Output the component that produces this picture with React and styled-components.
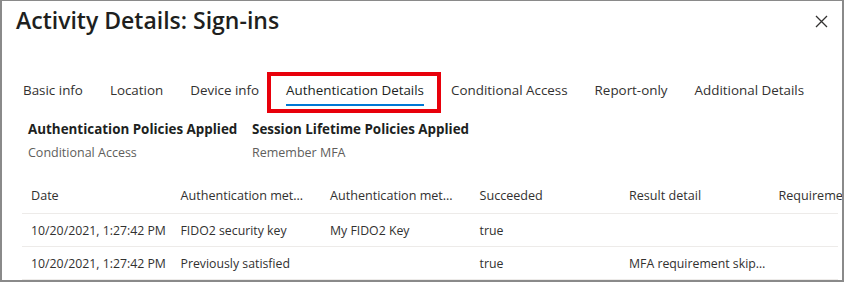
import React from 'react';
import styled, { createGlobalStyle } from 'styled-components';

const GlobalStyle = createGlobalStyle`
  html, body {
    margin: 0;
    padding: 0;
    background: #fff;
  }
  body {
    font-family: 'Open Sans', 'Noto Sans', sans-serif;
    color: #323130;
  }
`;

const Frame = styled.div`
  box-sizing: border-box;
  width: 844px;
  height: 282px;
  border: 2px solid #8a8a8a;
  border-top-width: 1px;
  overflow: hidden;
  background: #fff;
  padding-right: 4px;
`;

const Header = styled.div`
  display: flex;
  justify-content: space-between;
  align-items: flex-start;
  padding: 3px 9px 0 14px;
`;

const Title = styled.h1`
  margin: 0;
  font-size: 23px;
  font-weight: 600;
  line-height: 32px;
  color: #201f1e;
`;

const CloseButton = styled.button`
  border: 0;
  background: none;
  padding: 0;
  margin-top: 9px;
  width: 16px;
  height: 16px;
  display: flex;
  align-items: center;
  justify-content: center;
`;

const TabList = styled.div`
  display: flex;
  gap: 27px;
  padding: 44px 0 0 21px;
`;

const Tab = styled.div`
  position: relative;
  font-size: 13.4px;
  line-height: 20px;
  padding-bottom: 4px;
  white-space: nowrap;
  color: #323130;
  border-bottom: 2px solid ${(p) => (p.$active ? '#0078d4' : 'transparent')};

  ${(p) =>
    p.$active &&
    `
    color: #201f1e;
    &::after {
      content: '';
      position: absolute;
      left: -19px;
      right: -17px;
      top: -8px;
      bottom: -9px;
      border: 4px solid #e8000b;
      pointer-events: none;
    }
  `}
`;

const Policies = styled.div`
  display: grid;
  grid-template-columns: 224px auto;
  padding: 14px 0 0 26px;
  row-gap: 6px;
`;

const PolicyTitle = styled.div`
  font-size: 13.4px;
  font-weight: 700;
  line-height: 18px;
  color: #201f1e;
`;

const PolicyValue = styled.div`
  font-size: 12.5px;
  line-height: 18px;
  color: #605e5c;
`;

const Table = styled.div`
  margin: 15px 0 0 20px;
`;

const Row = styled.div`
  display: grid;
  grid-template-columns: repeat(6, 149.5px);
  height: ${(p) => (p.$head ? '36px' : '32px')};
  align-items: center;
  border-bottom: 1px solid #edebe9;
  font-size: ${(p) => (p.$head ? '12.6px' : '12.3px')};
  color: #323130;
  white-space: nowrap;
`;

const Cell = styled.div`
  padding-left: 9px;
  padding-right: ${(p) => (p.$head ? '16px' : '0')};
  overflow: hidden;
  text-overflow: ${(p) => (p.$clip ? 'clip' : 'ellipsis')};
`;

const columns = [
  'Date',
  'Authentication method',
  'Authentication method detail',
  'Succeeded',
  'Result detail',
  'Requirement',
];

const rows = [
  ['10/20/2021, 1:27:42 PM', 'FIDO2 security key', 'My FIDO2 Key', 'true', '', ''],
  ['10/20/2021, 1:27:42 PM', 'Previously satisfied', '', 'true', 'MFA requirement skipped due to remembered device', ''],
];

const tabs = [
  'Basic info',
  'Location',
  'Device info',
  'Authentication Details',
  'Conditional Access',
  'Report-only',
  'Additional Details',
];

export default function App() {
  return (
    <>
      <GlobalStyle />
      <Frame>
        <Header>
          <Title>Activity Details: Sign-ins</Title>
          <CloseButton aria-label="Close">
            <svg width="13" height="13" viewBox="0 0 13 13">
              <path d="M1 1 L12 12 M12 1 L1 12" stroke="#323130" strokeWidth="1.3" />
            </svg>
          </CloseButton>
        </Header>
        <TabList>
          {tabs.map((t) => (
            <Tab key={t} $active={t === 'Authentication Details'}>
              {t}
            </Tab>
          ))}
        </TabList>
        <Policies>
          <PolicyTitle>Authentication Policies Applied</PolicyTitle>
          <PolicyTitle>Session Lifetime Policies Applied</PolicyTitle>
          <PolicyValue>Conditional Access</PolicyValue>
          <PolicyValue>Remember MFA</PolicyValue>
        </Policies>
        <Table>
          <Row $head>
            {columns.map((c, i) => (
              <Cell key={c} $head $clip={i === columns.length - 1}>{c}</Cell>
            ))}
          </Row>
          {rows.map((r, ri) => (
            <Row key={ri}>
              {r.map((v, i) => (
                <Cell key={i}>{v}</Cell>
              ))}
            </Row>
          ))}
        </Table>
      </Frame>
    </>
  );
}
